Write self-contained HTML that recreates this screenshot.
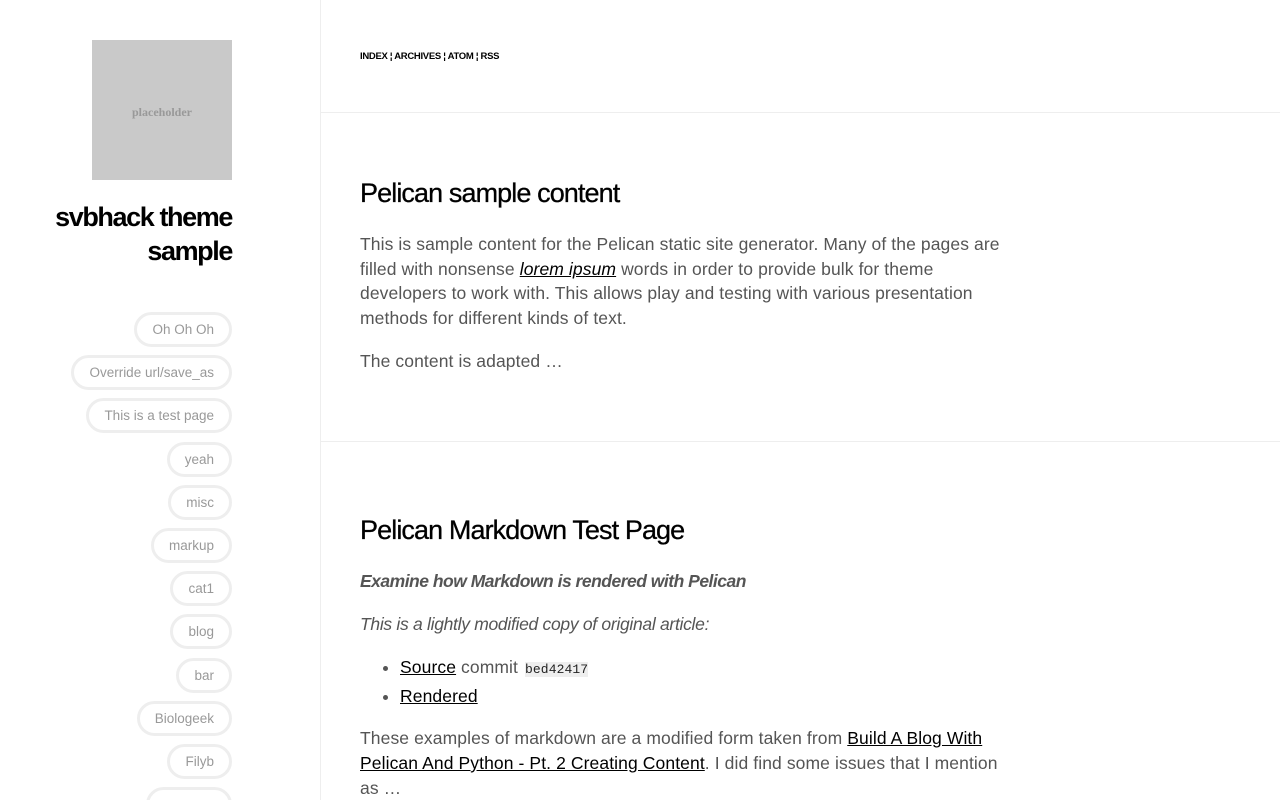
<!DOCTYPE html>
<html style="overflow:hidden;height:800px"><head><meta charset="utf-8"><style>
*{margin:0;padding:0;box-sizing:border-box}
body{width:1280px;height:800px;overflow:hidden;background:#fff;font-family:"Liberation Sans",sans-serif;position:relative}
#side{position:absolute;left:0;top:0;width:321px;height:800px;border-right:1px solid #eee;overflow:hidden}
#ph{position:absolute;left:92px;top:40px;width:140px;height:140px;background:#c9c9c9;color:#999;font:bold 12px "Liberation Serif",serif;text-align:center;line-height:144px}
#title{position:absolute;right:88px;top:200px;text-align:right;font-size:27px;line-height:34px;font-weight:bold;letter-spacing:-1.4px;color:#000}
.pill{position:absolute;right:88px;height:35px;border:3px solid #eee;border-radius:18px;padding:0 15px;font-size:13.5px;line-height:30px;color:#999;white-space:nowrap}
#nav{position:absolute;left:360px;top:51px;font-size:9.5px;font-weight:bold;color:#000;letter-spacing:-0.3px}
.hr{position:absolute;left:321px;width:959px;height:1px;background:#eee}
.art{position:absolute;left:360px;width:660px;color:#555;font-size:17.5px;line-height:24.7px;letter-spacing:0.1px;white-space:nowrap}
h2{font-size:27px;color:#000;font-weight:normal;letter-spacing:-0.9px;line-height:32px;-webkit-text-stroke:0.3px #000}
a{color:#000}
code{font-family:"Liberation Mono",monospace;font-size:13px;background:#eee;color:#222;margin-left:2px}
</style></head><body>
<div id="side">
<div id="ph">placeholder</div>
<div id="title">svbhack theme<br>sample</div>
<div class="pill" style="top:312px">Oh Oh Oh</div>
<div class="pill" style="top:355px">Override url/save_as</div>
<div class="pill" style="top:398px">This is a test page</div>
<div class="pill" style="top:442px">yeah</div>
<div class="pill" style="top:485px">misc</div>
<div class="pill" style="top:528px">markup</div>
<div class="pill" style="top:571px">cat1</div>
<div class="pill" style="top:614px">blog</div>
<div class="pill" style="top:658px">bar</div>
<div class="pill" style="top:701px">Biologeek</div>
<div class="pill" style="top:744px">Filyb</div>
<div class="pill" style="top:787px;width:86px">&nbsp;</div>
</div>
<div id="nav">INDEX ¦ ARCHIVES ¦ ATOM ¦ RSS</div>
<div class="hr" style="top:112px"></div>
<div class="art" style="top:177px">
<h2>Pelican sample content</h2>
<p style="margin-top:23px">This is sample content for the Pelican static site generator. Many of the pages are<br>filled with nonsense <a href="#"><i>lorem ipsum</i></a> words in order to provide bulk for theme<br>developers to work with. This allows play and testing with various presentation<br>methods for different kinds of text.</p>
<p style="margin-top:18px">The content is adapted …</p>
</div>
<div class="hr" style="top:441px"></div>
<div class="art" style="top:514px">
<h2>Pelican Markdown Test Page</h2>
<p style="margin-top:23px;letter-spacing:-0.5px"><b><i>Examine how Markdown is rendered with Pelican</i></b></p>
<p style="margin-top:18px;letter-spacing:-0.3px"><i>This is a lightly modified copy of original article:</i></p>
<ul style="margin:18px 0 0 40px;line-height:27px"><li><a href="#">Source</a> commit <code>bed42417</code></li><li><a href="#">Rendered</a></li></ul>
<p style="margin-top:16px">These examples of markdown are a modified form taken from <a href="#">Build A Blog With</a><br><a href="#">Pelican And Python - Pt. 2 Creating Content</a>. I did find some issues that I mention<br>as …</p>
</div>
</body></html>
